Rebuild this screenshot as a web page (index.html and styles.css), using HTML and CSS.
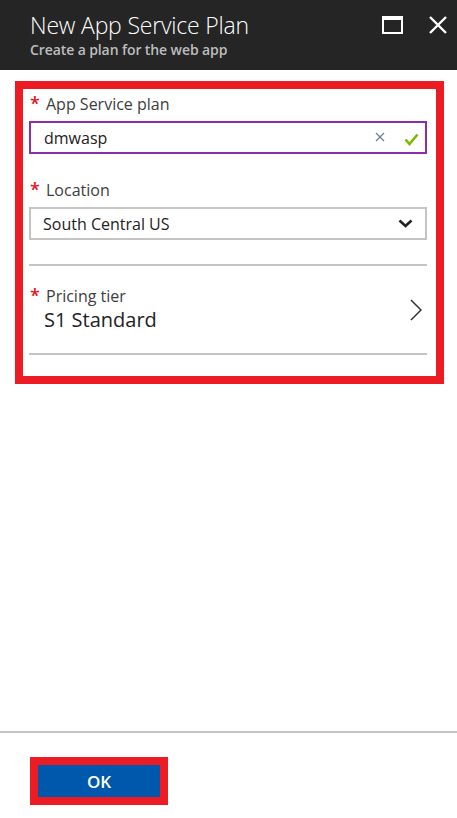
FILE: index.html
```html
<!DOCTYPE html>
<html>
<head>
<meta charset="utf-8">
<link rel="stylesheet" href="styles.css">
</head>
<body>
<header class="header">
  <div class="titles">
    <div class="title">New App Service Plan</div>
    <div class="subtitle">Create a plan for the web app</div>
  </div>
  <div class="win-icons">
    <svg class="ico-max" width="21" height="18" viewBox="0 0 21 18"><rect x="1" y="2" width="19" height="15" fill="none" stroke="#fff" stroke-width="2"/><rect x="0" y="0" width="21" height="4" fill="#fff"/></svg>
    <svg class="ico-close" width="18" height="18" viewBox="0 0 18 18"><path d="M1 1 L17 17 M17 1 L1 17" stroke="#fff" stroke-width="2.4"/></svg>
  </div>
</header>

<main class="content">
  <section class="red-box">
    <div class="field">
      <div class="label"><span class="req">*</span>App Service plan</div>
      <div class="input active">
        <span class="value">dmwasp</span>
        <svg class="ico-clear" width="10" height="10" viewBox="0 0 10 10"><path d="M1 1 L9 9 M9 1 L1 9" stroke="#6d7f95" stroke-width="1.2"/></svg>
        <svg class="ico-check" width="15" height="13" viewBox="0 0 15 13"><path d="M1.5 6.5 L5.5 11 L13.5 1.5" fill="none" stroke="#7fba00" stroke-width="2.6"/></svg>
      </div>
    </div>
    <div class="field loc">
      <div class="label"><span class="req">*</span>Location</div>
      <div class="input select">
        <span class="value">South Central US</span>
        <svg class="ico-down" width="15" height="9" viewBox="0 0 15 9"><path d="M1.5 1.5 L7.5 7 L13.5 1.5" fill="none" stroke="#222" stroke-width="2.6"/></svg>
      </div>
    </div>
    <div class="tier">
      <div class="tier-text">
        <div class="label"><span class="req">*</span>Pricing tier</div>
        <div class="tier-value">S1 Standard</div>
      </div>
      <svg class="ico-right" width="12" height="22" viewBox="0 0 12 22"><path d="M1 1 L11 11 L1 21" fill="none" stroke="#333" stroke-width="1.5"/></svg>
    </div>
  </section>
</main>

<footer class="footer">
  <div class="ok-wrap"><button class="ok">OK</button></div>
</footer>
</body>
</html>
```

FILE: styles.css
```css
html, body {
  margin: 0;
  padding: 0;
  background: #fff;
  font-family: "Open Sans", "Noto Sans", sans-serif;
  color: #222;
}
body {
  width: 457px;
  height: 818px;
  display: flex;
  flex-direction: column;
  overflow: hidden;
}
.header {
  background: #252525;
  height: 70px;
  box-sizing: border-box;
  padding: 9px 10px 0 30px;
  display: flex;
  justify-content: space-between;
  align-items: flex-start;
}
.title {
  color: #fff;
  font-size: 23px;
  font-weight: 300;
  line-height: 32px;
  letter-spacing: -0.2px;
}
.subtitle {
  color: #bdbdbd;
  font-size: 14px;
  font-weight: 600;
  line-height: 16px;
  margin-top: 1px;
  letter-spacing: -0.1px;
}
.win-icons {
  display: flex;
  gap: 26px;
  margin-top: 7px;
}
.content {
  padding: 11px 0 0 15px;
}
.red-box {
  width: 429px;
  box-sizing: border-box;
  border: 8px solid #ed1c24;
  padding: 4px 9px 21px 6px;
}
.label {
  font-size: 16px;
  line-height: 22px;
  color: #3d3d3d;
  display: flex;
  align-items: flex-start;
}
.req {
  color: #e81123;
  font-size: 18px;
  width: 16px;
  padding-left: 1px;
  font-weight: 600;
  line-height: 20px;
}
.input {
  margin-top: 6px;
  height: 33px;
  box-sizing: border-box;
  border: 2px solid #8a2fa8;
  display: flex;
  align-items: center;
  padding: 0 6px 0 13px;
  font-size: 16px;
}
.input .value {
  flex: 1;
  color: #222;
}
.ico-clear {
  margin-right: 19px;
  margin-top: -2px;
}
.ico-check {
  margin-top: 3px;
}
.input.select {
  border-color: #c4c4c4;
  padding-left: 12px;
  padding-right: 12px;
}
.field.loc {
  margin-top: 25px;
}
.tier {
  margin-top: 24px;
  border-top: 2px solid #c4c4c4;
  border-bottom: 2px solid #c4c4c4;
  height: 91px;
  box-sizing: border-box;
  display: flex;
  align-items: center;
  justify-content: space-between;
  padding: 0 5px 0 0;
}
.tier-text {
  margin-top: -2px;
}
.tier-value {
  font-size: 20px;
  line-height: 26px;
  padding-left: 15px;
  color: #222;
}
.footer {
  margin-top: auto;
  height: 87px;
  border-top: 2px solid #c4c4c4;
  box-sizing: border-box;
  padding: 24px 0 0 30px;
}
.ok-wrap {
  display: inline-block;
  border: 8px solid #ed1c24;
}
.ok {
  display: block;
  width: 122px;
  height: 32px;
  background: #0058ad;
  color: #fff;
  border: 0;
  font-family: "Open Sans", "Noto Sans", sans-serif;
  font-weight: 600;
  font-size: 17px;
  padding: 0;
}
```
